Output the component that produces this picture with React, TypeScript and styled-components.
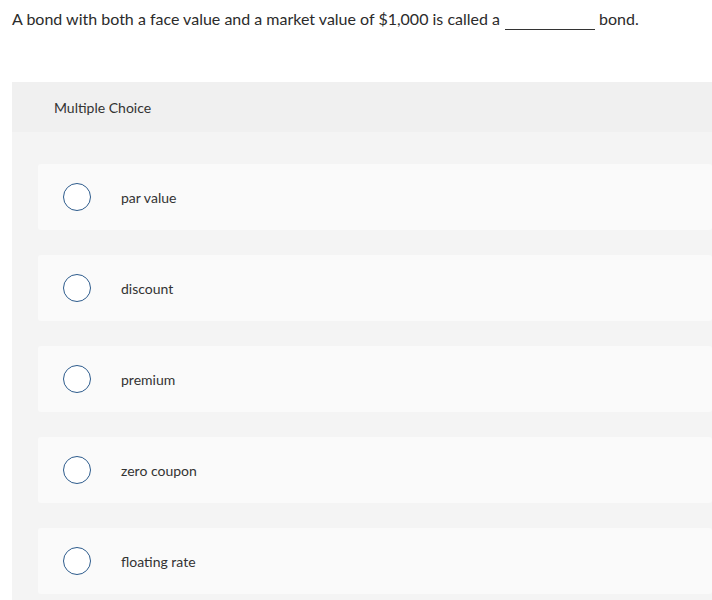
import * as React from 'react';
import styled, { createGlobalStyle } from 'styled-components';

const options = ['par value', 'discount', 'premium', 'zero coupon', 'floating rate'];

const GlobalStyle = createGlobalStyle`
  body {
    margin: 0;
    background: #ffffff;
    font-family: Lato, "Open Sans", sans-serif;
    color: #333333;
  }
`;

const Page = styled.div`
  padding: 9px 0 0 12px;
`;

const Question = styled.p`
  margin: 0;
  font-size: 16px;
  line-height: 20px;
  color: #2b2b2b;
`;

const Blank = styled.span`
  display: inline-block;
  width: 90px;
  margin: 0 4px 0 5px;
  border-bottom: 1px solid #333333;
`;

const Panel = styled.section`
  margin-top: 52px;
  background: #f4f4f4;
  padding-bottom: 6px;
`;

const PanelHeader = styled.header`
  height: 50px;
  background: #f0f0f0;
  display: flex;
  align-items: center;
  padding-left: 42px;
  font-size: 14px;
  color: #333333;
`;

const OptionList = styled.div`
  display: flex;
  flex-direction: column;
  gap: 25px;
  padding: 32px 0 0 26px;
`;

const OptionCard = styled.label`
  height: 66px;
  display: flex;
  align-items: center;
  background: #fafafa;
  border-radius: 3px;
  padding-left: 25px;
  cursor: pointer;
`;

const Radio = styled.span`
  box-sizing: border-box;
  width: 28px;
  height: 28px;
  border-radius: 50%;
  border: 1.5px solid #2d5b8c;
  background: #ffffff;
  flex-shrink: 0;
`;

const OptionText = styled.span`
  margin-left: 30px;
  font-size: 14px;
  color: #333333;
`;

export default function App() {
  return (
    <Page>
      <GlobalStyle />
      <Question>
        A bond with both a face value and a market value of $1,000 is called a
        <Blank>&nbsp;</Blank>bond.
      </Question>

      <Panel>
        <PanelHeader>Multiple Choice</PanelHeader>
        <OptionList>
          {options.map(option => (
            <OptionCard key={option}>
              <Radio />
              <OptionText>{option}</OptionText>
            </OptionCard>
          ))}
        </OptionList>
      </Panel>
    </Page>
  );
}
